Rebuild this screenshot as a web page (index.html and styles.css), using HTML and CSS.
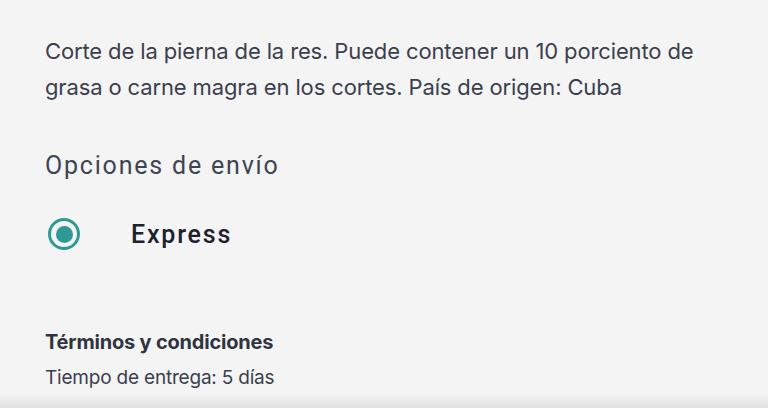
FILE: index.html
```html
<!DOCTYPE html>
<html lang="es">
<head>
<meta charset="utf-8">
<link rel="stylesheet" href="styles.css">
</head>
<body>
<main class="page">
  <p class="desc">Corte de la pierna de la res. Puede contener un 10 porciento de grasa o carne magra en los cortes. País de origen: Cuba</p>
  <h2 class="section-title">Opciones de envío</h2>
  <label class="option">
    <span class="radio"><span class="radio-dot"></span></span>
    <span class="option-label">Express</span>
  </label>
  <h3 class="terms-title">Términos y condiciones</h3>
  <p class="terms-text">Tiempo de entrega: 5 días</p>
</main>
<div class="bottom-bar"></div>
</body>
</html>
```

FILE: styles.css
```css
html, body {
  margin: 0;
  padding: 0;
  height: 100%;
  overflow: hidden;
}
body {
  background: #f4f4f5;
  font-family: Inter, "Noto Sans", sans-serif;
  color: #3a3f4b;
  position: relative;
}
.page {
  padding: 33px 45px 0 45px;
}
.desc {
  margin: 0;
  font-size: 22px;
  line-height: 36px;
  width: 690px;
  color: #3b404c;
  letter-spacing: -0.13px;
}
.section-title {
  margin: 45px 0 0 0;
  font-family: Roboto, sans-serif;
  font-weight: 400;
  font-size: 25px;
  line-height: 32px;
  letter-spacing: 1.8px;
  color: #3d4452;
}
.option {
  display: flex;
  align-items: center;
  margin-top: 36px;
  padding-left: 3px;
}
.radio {
  width: 32px;
  height: 32px;
  box-sizing: border-box;
  border: 3.5px solid #2f9a95;
  border-radius: 50%;
  display: flex;
  align-items: center;
  justify-content: center;
}
.radio-dot {
  width: 17px;
  height: 17px;
  border-radius: 50%;
  background: #2f9a95;
}
.option-label {
  margin-left: 51px;
  font-family: Roboto, sans-serif;
  font-weight: 500;
  font-size: 25px;
  letter-spacing: 1.8px;
  color: #1e212b;
}
.terms-title {
  margin: 79px 0 0 0;
  font-size: 20px;
  font-weight: 700;
  line-height: 26px;
  color: #30343e;
  letter-spacing: -0.2px;
}
.terms-text {
  margin: 11px 0 0 0;
  font-size: 19px;
  line-height: 24px;
  color: #3b404c;
  letter-spacing: -0.2px;
}
.bottom-bar {
  position: absolute;
  left: 0;
  right: 0;
  bottom: 0;
  height: 16px;
  background: linear-gradient(to bottom, rgba(0,0,0,0) 0%, rgba(0,0,0,0.08) 85%, #ffffff 86%, #ffffff 100%);
}
```
